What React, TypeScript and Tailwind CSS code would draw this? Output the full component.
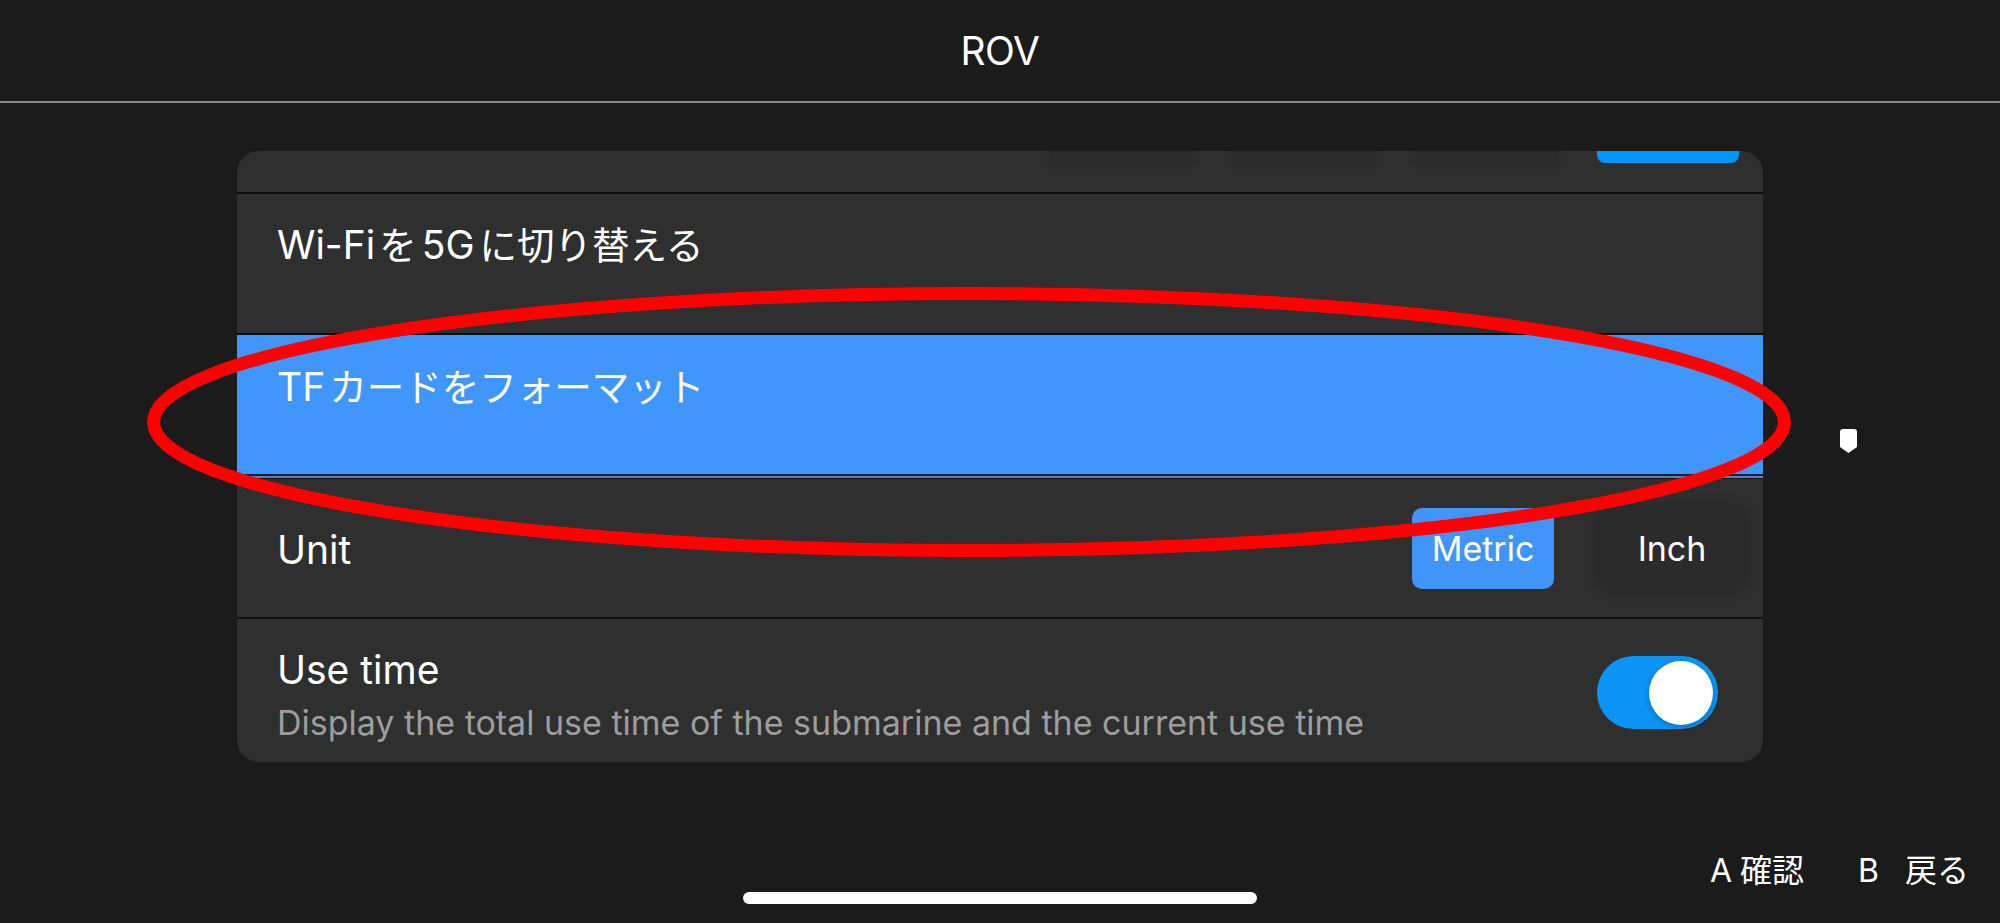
import React from "react";

const FONT = "font-['Inter','Noto_Sans_CJK_JP',sans-serif]";

function Sep() {
  return <div className="h-[2px] bg-[#0f0f10]" />;
}

export default function App() {
  return (
    <div className={`relative flex h-[923px] w-[2000px] flex-col overflow-hidden bg-[#1b1b1c] text-white ${FONT}`}>
      {/* header */}
      <div className="flex h-[101px] items-center justify-center">
        <span className="text-[39px] leading-[48px] tracking-[-0.5px] text-white">ROV</span>
      </div>
      <div className="h-[2px] bg-[#8a8a8a]" />

      {/* card */}
      <div className="mx-auto mt-[48px] w-[1526px] overflow-hidden rounded-[22px] bg-[#2f2f30]">
        {/* partially scrolled row */}
        <div className="flex h-[41px] items-start justify-end gap-[40px] pr-[24px]">
          <div className="h-[14px] w-[142px] rounded-b-[8px] bg-[#2c2c2d] shadow-[0_2px_10px_rgba(0,0,0,0.12)]" />
          <div className="h-[14px] w-[142px] rounded-b-[8px] bg-[#2c2c2d] shadow-[0_2px_10px_rgba(0,0,0,0.12)]" />
          <div className="h-[14px] w-[142px] rounded-b-[8px] bg-[#2c2c2d] shadow-[0_2px_10px_rgba(0,0,0,0.12)]" />
          <div className="h-[12px] w-[142px] rounded-b-[8px] bg-[#0096fb]" />
        </div>
        <Sep />

        {/* Wi-Fi row */}
        <div className="h-[139px] pl-[40px] pt-[27px]">
          <div className="text-[39px] leading-[48px]">
            Wi-Fi<span className="ml-[4px] text-[37.5px]">を</span>
            <span className="ml-[5px]">5G</span>
            <span className="ml-[5px] text-[37.5px]">に切り替える</span>
          </div>
        </div>
        <Sep />

        {/* selected row */}
        <div className="h-[139px] bg-[#4096fc] pl-[40px] pt-[28px]">
          <div className="text-[39px] leading-[48px]">
            TF<span className="ml-[4px] text-[37.5px]">カードをフォーマット</span>
          </div>
        </div>
        <div className="h-[2px] bg-[#13223a]" />
        <div className="h-[2px] bg-[#5a82c0]" />
        <div className="h-[1px] bg-[#151515]" />

        {/* Unit row */}
        <div className="flex h-[138px] items-center pl-[40px] pr-[19px]">
          <div className="flex-1 pt-[4px] text-[39px] leading-[48px]">Unit</div>
          <div className="flex items-center gap-[46px]">
            <div className="flex h-[81px] w-[142px] items-center justify-center rounded-[10px] bg-[#4195fa] text-[34px]">
              Metric
            </div>
            <div className="flex h-[81px] w-[144px] items-center justify-center rounded-[10px] bg-[#2b2b2c] text-[34px] shadow-[0_0_14px_rgba(0,0,0,0.25)]">
              Inch
            </div>
          </div>
        </div>
        <Sep />

        {/* Use time row */}
        <div className="flex h-[143px] pl-[40px] pr-[45px]">
          <div className="flex-1 pt-[27px]">
            <div className="text-[39px] leading-[48px]">Use time</div>
            <div className="mt-[7px] text-[34px] leading-[44px] text-[#9d9d9f]">
              Display the total use time of the submarine and the current use time
            </div>
          </div>
          <div className="flex items-center pt-[4px]">
            <div className="flex h-[73px] w-[121px] items-center justify-end rounded-full bg-[#0a95f6] pr-[5px]">
              <div className="h-[64px] w-[64px] rounded-full bg-white shadow-[0_2px_6px_rgba(0,0,0,0.25)]" />
            </div>
          </div>
        </div>
      </div>

      {/* footer hints */}
      <div className="mt-[89px] flex justify-end pr-[31px] text-[32px] leading-[40px]">
        <span>A</span>
        <span className="ml-[8px]">確認</span>
        <span className="ml-[54px]">B</span>
        <span className="ml-[26px]">戻る</span>
      </div>

      {/* home indicator */}
      <div className="absolute left-[743px] top-[892px] h-[12px] w-[514px] rounded-full bg-white" />

      {/* scroll indicator */}
      <svg className="absolute left-[1840px] top-[429px]" width="17" height="24" viewBox="0 0 17 24">
        <path d="M3 0 H14 Q17 0 17 3 V18 L8.5 24 L0 18 V3 Q0 0 3 0 Z" fill="#ffffff" />
      </svg>

      {/* red annotation ellipse */}
      <svg className="pointer-events-none absolute left-0 top-0" width="2000" height="923" viewBox="0 0 2000 923">
        <ellipse cx="969" cy="422" rx="815.5" ry="128.5" fill="none" stroke="#ff0000" strokeWidth="13" />
      </svg>
    </div>
  );
}
